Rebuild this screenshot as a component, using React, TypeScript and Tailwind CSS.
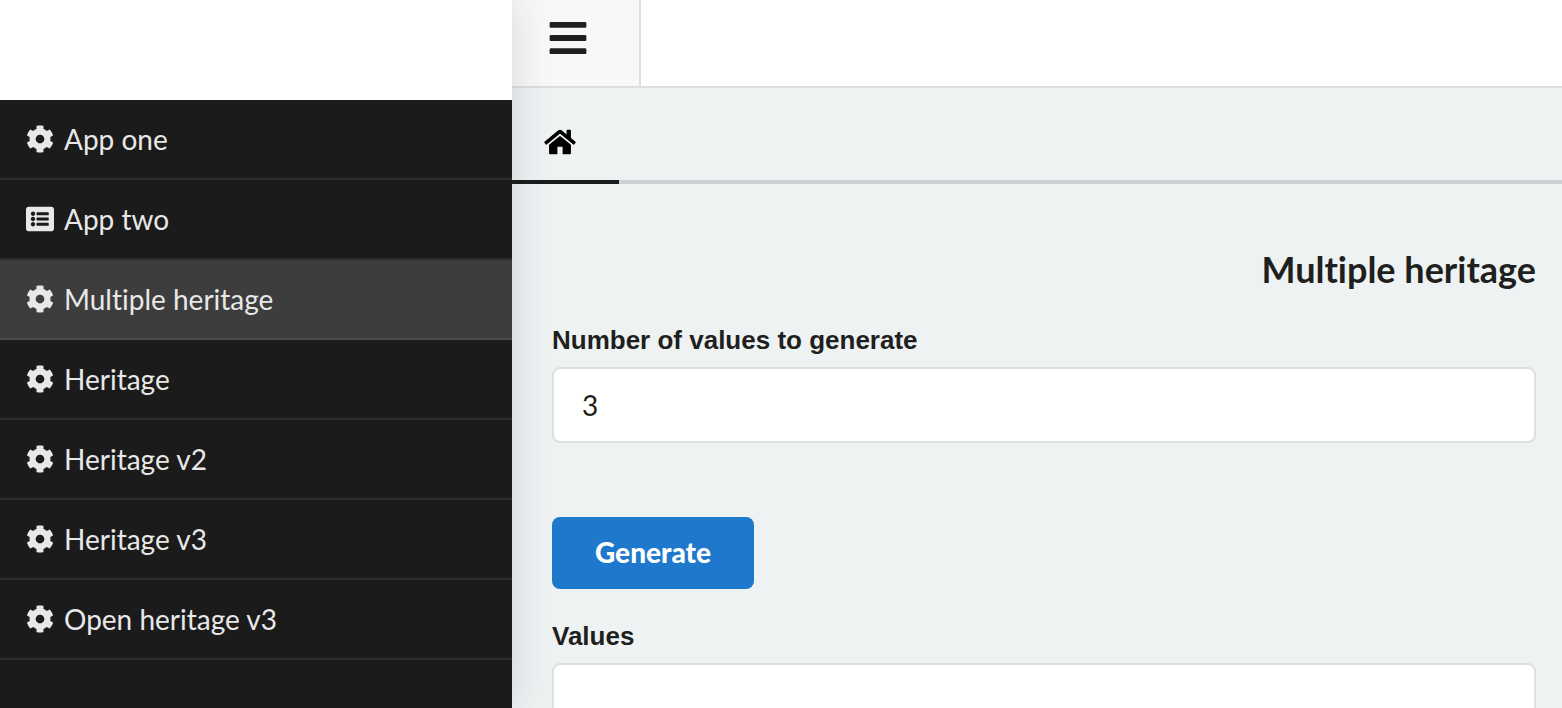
import { FaBars } from "react-icons/fa";

const items = [
  { label: "App one" },
  { label: "App two", list: true },
  { label: "Multiple heritage", active: true },
  { label: "Heritage" },
  { label: "Heritage v2" },
  { label: "Heritage v3" },
  { label: "Open heritage v3" },
];

function CogIcon() {
  return (
    <svg viewBox="0 0 512 512" className="size-7 shrink-0" fill="currentColor" aria-hidden="true">
      <path d="M444.788 291.1l42.616 24.599c4.867 2.809 7.126 8.618 5.459 13.985-11.07 35.642-29.97 67.842-54.689 94.586a12.016 12.016 0 0 1-14.832 2.254l-42.584-24.595a191.577 191.577 0 0 1-60.759 35.13v49.182a12.01 12.01 0 0 1-9.377 11.718c-34.956 7.85-72.499 8.256-109.219.007-5.49-1.233-9.403-6.096-9.403-11.723v-49.184a191.555 191.555 0 0 1-60.759-35.13l-42.584 24.595a12.016 12.016 0 0 1-14.832-2.254c-24.718-26.744-43.619-58.944-54.689-94.586-1.667-5.366.592-11.175 5.459-13.985L67.212 291.1a193.48 193.48 0 0 1 0-70.199l-42.616-24.599c-4.867-2.809-7.126-8.618-5.459-13.985 11.07-35.642 29.97-67.842 54.689-94.586a12.016 12.016 0 0 1 14.832-2.254l42.584 24.595a191.577 191.577 0 0 1 60.759-35.13V25.759a12.01 12.01 0 0 1 9.377-11.718c34.956-7.85 72.499-8.256 109.219-.007 5.49 1.233 9.403 6.096 9.403 11.723v49.184a191.555 191.555 0 0 1 60.759 35.13l42.584-24.595a12.016 12.016 0 0 1 14.832 2.254c24.718 26.744 43.619 58.944 54.689 94.586 1.667 5.366-.592 11.175-5.459 13.985L444.788 220.9a193.485 193.485 0 0 1 0 70.2zM336 256c0-44.112-35.888-80-80-80s-80 35.888-80 80 35.888 80 80 80 80-35.888 80-80z" />
    </svg>
  );
}

function ListIcon() {
  return (
    <svg viewBox="0 0 512 512" className="size-7 shrink-0" fill="currentColor" aria-hidden="true">
      <path d="M464 480H48c-26.51 0-48-21.49-48-48V80c0-26.51 21.49-48 48-48h416c26.51 0 48 21.49 48 48v352c0 26.51-21.49 48-48 48zM128 120c-22.091 0-40 17.909-40 40s17.909 40 40 40 40-17.909 40-40-17.909-40-40-40zm0 96c-22.091 0-40 17.909-40 40s17.909 40 40 40 40-17.909 40-40-17.909-40-40-40zm0 96c-22.091 0-40 17.909-40 40s17.909 40 40 40 40-17.909 40-40-17.909-40-40-40zm288-136v-32c0-6.627-5.373-12-12-12H204c-6.627 0-12 5.373-12 12v32c0 6.627 5.373 12 12 12h200c6.627 0 12-5.373 12-12zm0 96v-32c0-6.627-5.373-12-12-12H204c-6.627 0-12 5.373-12 12v32c0 6.627 5.373 12 12 12h200c6.627 0 12-5.373 12-12zm0 96v-32c0-6.627-5.373-12-12-12H204c-6.627 0-12 5.373-12 12v32c0 6.627 5.373 12 12 12h200c6.627 0 12-5.373 12-12z" />
    </svg>
  );
}

function HomeIcon() {
  return (
    <svg viewBox="0 0 576 512" className="h-7 w-8 shrink-0" fill="currentColor" aria-hidden="true">
      <path d="M488 312.7V456c0 13.3-10.7 24-24 24H348c-6.6 0-12-5.4-12-12V356c0-6.6-5.4-12-12-12h-72c-6.6 0-12 5.4-12 12v112c0 6.6-5.4 12-12 12H112c-13.3 0-24-10.7-24-24V312.7c0-3.6 1.6-7 4.4-9.3l188-154.800c4.400-3.600 10.800-3.600 15.300 0l188 154.800c2.700 2.300 4.300 5.700 4.300 9.300zm83.600-60.900L488 182.900V44.400c0-6.600-5.400-12-12-12h-56c-6.600 0-12 5.400-12 12V117l-89.500-73.700c-17.700-14.600-43.300-14.600-61 0L4.400 251.800c-5.100 4.200-5.800 11.800-1.600 16.900l25.500 31c4.200 5.100 11.800 5.800 16.900 1.600l235.200-193.700c4.400-3.600 10.800-3.600 15.300 0l235.200 193.700c5.100 4.200 12.700 3.500 16.900-1.600l25.500-31c4.200-5.200 3.400-12.700-1.700-16.900z" />
    </svg>
  );
}

export default function App() {
  return (
    <div className="flex h-screen overflow-hidden bg-white font-['Lato',sans-serif] text-[#1f1f20] [font-variant-ligatures:none]">
      <aside className="relative z-10 flex w-128 shrink-0 flex-col bg-white pt-25 shadow-[0_0_40px_rgba(34,36,38,0.15)]">
        <nav className="flex-1 bg-[#1b1b1b]">
          {items.map(({ label, list, active }) => (
            <a
              key={label}
              href="#"
              aria-current={active ? "page" : undefined}
              className={`flex h-20 items-center gap-2.5 border-b-2 px-6.5 text-[28px] text-[#e8e8e8] ${
                active ? "border-[#4a4a4a] bg-[#3d3d3d]" : "border-[#2d2d2d]"
              }`}
            >
              {list ? <ListIcon /> : <CogIcon />}
              <span>{label}</span>
            </a>
          ))}
        </nav>
      </aside>
      <div className="flex min-w-0 flex-1 flex-col bg-[#eef2f3]">
        <header className="flex h-22 shrink-0 border-b-2 border-[#dededf] bg-white">
          <button aria-label="Toggle menu" className="flex w-[129px] items-start border-r-2 border-[#dededf] bg-[#f8f8f8] pt-[17px] pl-[35px]">
            <FaBars className="size-[42px]" />
          </button>
        </header>
        <nav className="flex h-24 shrink-0 border-b-4 border-[#cdd1d3]">
          <a href="#" aria-label="Home" className="-mb-1 flex w-[107px] items-center border-b-4 border-[#1b1c1d] pt-4 pl-8 text-black">
            <HomeIcon />
          </a>
        </nav>
        <main className="flex flex-col pt-[63px] pr-6.5 pl-10">
          <h1 className="text-right text-[36px] leading-11 font-bold">Multiple heritage</h1>
          <form className="flex flex-col">
            <label htmlFor="count" className="mt-[33px] font-['Liberation_Sans',sans-serif] text-[26px] leading-8 font-bold">
              Number of values to generate
            </label>
            <input id="count" defaultValue="3" className="mt-[11px] h-19 rounded-lg border-2 border-[#dedfdf] bg-white px-7 text-[28px] outline-none" />
            <button type="button" className="mt-[74px] h-18 w-[202px] rounded-lg bg-[#1e78cc] pb-0.5 text-[28px] font-black text-white">
              Generate
            </button>
            <label htmlFor="values" className="mt-[31px] font-['Liberation_Sans',sans-serif] text-[26px] leading-8 font-bold">
              Values
            </label>
            <textarea id="values" className="mt-[11px] h-48 resize-none rounded-lg border-2 border-[#dedfdf] bg-white px-7 py-4 text-[28px] outline-none" />
          </form>
        </main>
      </div>
    </div>
  );
}
